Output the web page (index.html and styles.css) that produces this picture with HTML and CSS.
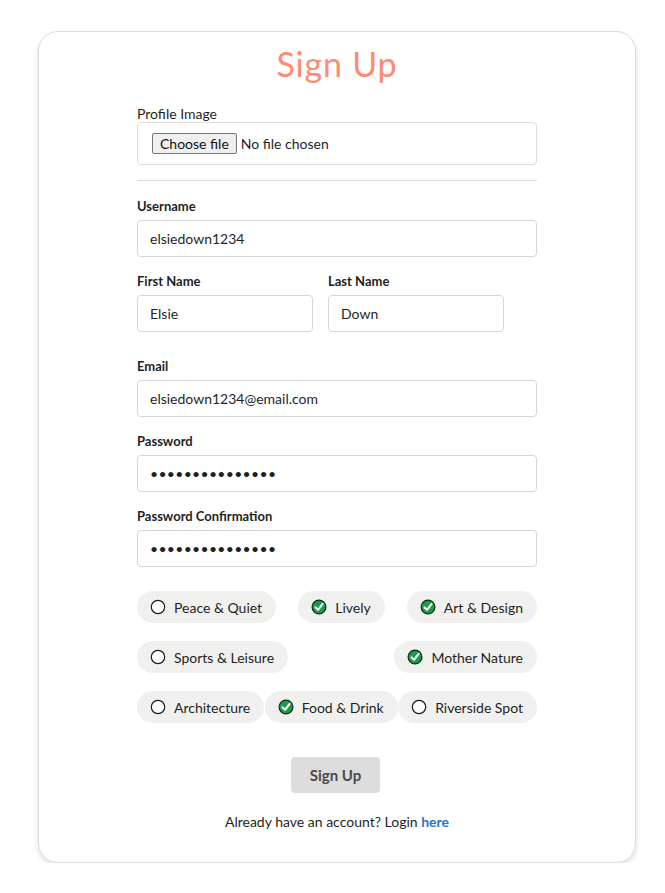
FILE: index.html
```html
<!DOCTYPE html>
<html lang="en">
<head>
<meta charset="utf-8">
<title>Sign Up</title>
<link rel="stylesheet" href="styles.css">
</head>
<body>
<div class="card">
  <h1 class="title">Sign Up</h1>
  <form class="form">
    <div class="file-group">
      <span class="file-label">Profile Image</span>
      <label class="file-box">
        <span class="file-btn">Choose file</span>
        <span class="file-text">No file chosen</span>
        <input class="file-hidden" type="file">
      </label>
    </div>
    <hr class="divider">
    <div class="field">
      <label class="label">Username</label>
      <input class="input" type="text" value="elsiedown1234">
    </div>
    <div class="name-row">
      <div class="field name-field">
        <label class="label">First Name</label>
        <input class="input" type="text" value="Elsie">
      </div>
      <div class="field name-field">
        <label class="label">Last Name</label>
        <input class="input" type="text" value="Down">
      </div>
    </div>
    <div class="field">
      <label class="label">Email</label>
      <input class="input" type="text" value="elsiedown1234@email.com">
    </div>
    <div class="field">
      <label class="label">Password</label>
      <input class="input pw" type="password" value="abcdefghijklmno">
    </div>
    <div class="field">
      <label class="label">Password Confirmation</label>
      <input class="input pw" type="password" value="abcdefghijklmno">
    </div>

    <div class="chips">
      <span class="chip"><svg class="ico" viewBox="0 0 16 16"><circle cx="8" cy="8" r="6.7" fill="#fff" stroke="#1a1a1a" stroke-width="1.2"/></svg>Peace &amp; Quiet</span>
      <span class="chip"><svg class="ico" viewBox="0 0 16 16"><circle cx="8" cy="8" r="6.9" fill="#1c9a4c" stroke="#0d2a18" stroke-width="1.2"/><path d="M4.6 8.4 L7 10.8 L11.6 4.9" fill="none" stroke="#fff" stroke-width="2.1" stroke-linecap="round" stroke-linejoin="round"/></svg>Lively</span>
      <span class="chip"><svg class="ico" viewBox="0 0 16 16"><circle cx="8" cy="8" r="6.9" fill="#1c9a4c" stroke="#0d2a18" stroke-width="1.2"/><path d="M4.6 8.4 L7 10.8 L11.6 4.9" fill="none" stroke="#fff" stroke-width="2.1" stroke-linecap="round" stroke-linejoin="round"/></svg>Art &amp; Design</span>
      <span class="chip"><svg class="ico" viewBox="0 0 16 16"><circle cx="8" cy="8" r="6.7" fill="#fff" stroke="#1a1a1a" stroke-width="1.2"/></svg>Sports &amp; Leisure</span>
      <span class="chip"><svg class="ico" viewBox="0 0 16 16"><circle cx="8" cy="8" r="6.9" fill="#1c9a4c" stroke="#0d2a18" stroke-width="1.2"/><path d="M4.6 8.4 L7 10.8 L11.6 4.9" fill="none" stroke="#fff" stroke-width="2.1" stroke-linecap="round" stroke-linejoin="round"/></svg>Mother Nature</span>
      <span class="chip"><svg class="ico" viewBox="0 0 16 16"><circle cx="8" cy="8" r="6.7" fill="#fff" stroke="#1a1a1a" stroke-width="1.2"/></svg>Architecture</span>
      <span class="chip"><svg class="ico" viewBox="0 0 16 16"><circle cx="8" cy="8" r="6.9" fill="#1c9a4c" stroke="#0d2a18" stroke-width="1.2"/><path d="M4.6 8.4 L7 10.8 L11.6 4.9" fill="none" stroke="#fff" stroke-width="2.1" stroke-linecap="round" stroke-linejoin="round"/></svg>Food &amp; Drink</span>
      <span class="chip"><svg class="ico" viewBox="0 0 16 16"><circle cx="8" cy="8" r="6.7" fill="#fff" stroke="#1a1a1a" stroke-width="1.2"/></svg>Riverside Spot</span>
    </div>

    <div class="submit-row">
      <button class="submit" type="button">Sign Up</button>
    </div>
    <p class="footer">Already have an account? Login <a class="link" href="#">here</a></p>
  </form>
</div>
</body>
</html>
```

FILE: styles.css
```css
* { box-sizing: border-box; }
html, body { margin: 0; padding: 0; background: #fff; }
body {
  font-family: Lato, "Liberation Sans", sans-serif;
  color: #1f1f1f;
  padding-top: 31px;
}
.card {
  width: 598px;
  margin: 0 0 0 38px;
  border: 1px solid #dcdcdc;
  border-radius: 20px;
  box-shadow: 0 3px 5px rgba(0,0,0,0.13);
  padding: 10px 0 32px;
}
.title {
  margin: 0;
  text-align: center;
  font-family: Lato, sans-serif;
  font-weight: 400;
  font-size: 34px;
  line-height: 44px;
  letter-spacing: 0.8px;
  color: #fd8c75;
}
.form {
  width: 400px;
  margin: 19px auto 0;
}
.file-label {
  display: block;
  font-size: 14px;
  line-height: 17px;
}
.file-box {
  display: flex;
  align-items: center;
  height: 43px;
  padding: 0 14px;
  border: 1px solid #dcdcdc;
  border-radius: 4px;
  font-size: 14px;
  color: #1f1f1f;
}
.file-btn {
  display: inline-block;
  height: 21px;
  line-height: 19px;
  padding: 0 7px;
  background: #efefef;
  border: 1px solid #767676;
  border-radius: 2px;
  color: #111;
  margin-right: 4px;
}
.file-hidden { display: none; }
.divider {
  border: 0;
  border-top: 1px solid #dcdcdc;
  margin: 15px 0 17px;
}
.field { margin-bottom: 16px; }
.label {
  display: block;
  font-size: 13px;
  font-weight: 700;
  line-height: 16px;
  margin-bottom: 6px;
  color: #1f1f1f;
}
.input {
  display: block;
  width: 100%;
  height: 37px;
  padding: 0 12px;
  border: 1px solid #d6d6d6;
  border-radius: 4px;
  font-family: Lato, sans-serif;
  font-size: 14px;
  color: #1f1f1f;
  background: #fff;
}
.pw { font-size: 14px; letter-spacing: 0.3px; }
.name-row {
  display: flex;
  gap: 15px;
  margin-bottom: 10px;
}
.name-field { width: 176px; }
.chips {
  display: flex;
  flex-wrap: wrap;
  justify-content: space-between;
  row-gap: 18px;
  margin-top: 24px;
}
.chip {
  display: inline-flex;
  align-items: center;
  height: 32px;
  padding: 0 14px;
  border-radius: 16px;
  background: #f0f1ef;
  font-size: 14px;
  color: #1f1f1f;
  white-space: nowrap;
}
.ico {
  width: 16px;
  height: 16px;
  margin-right: 8px;
  margin-left: -1px;
}
.submit-row {
  display: flex;
  justify-content: center;
  margin-top: 34px;
  padding-right: 3px;
}
.submit {
  width: 89px;
  height: 36px;
  border: 0;
  border-radius: 4px;
  background: #dddddd;
  font-family: Lato, sans-serif;
  font-size: 15px;
  font-weight: 700;
  color: #4a4a4a;
}
.footer {
  margin: 21px 0 0;
  text-align: center;
  font-size: 14px;
  line-height: 16px;
}
.link {
  color: #2a72c7;
  font-weight: 700;
  text-decoration: none;
}
```
